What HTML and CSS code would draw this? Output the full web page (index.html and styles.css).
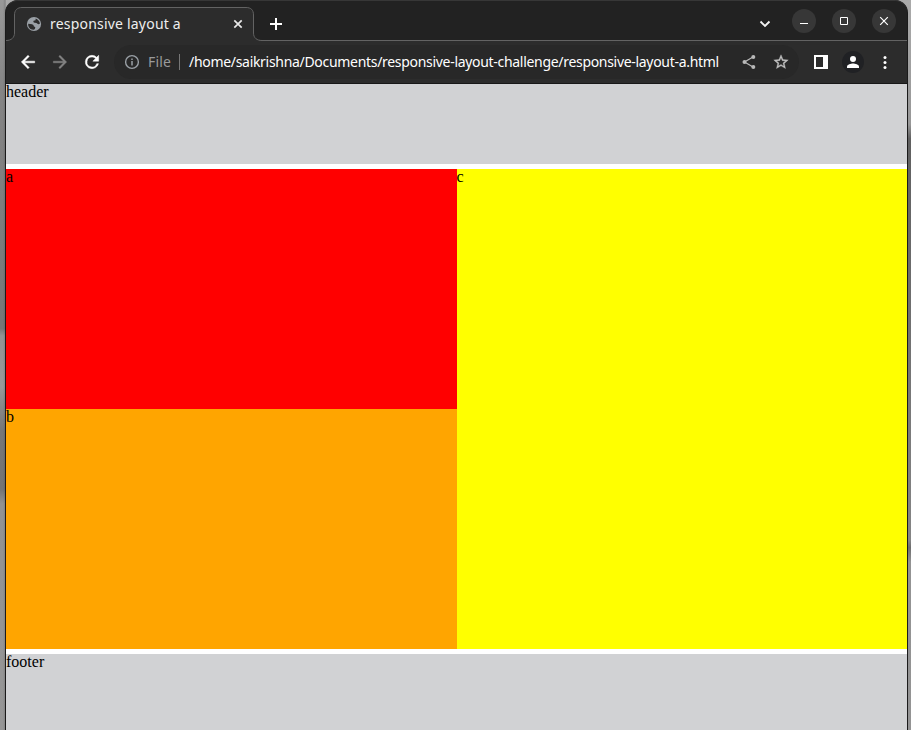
FILE: index.html
```
<!DOCTYPE html>
<html lang="en">
<head>
<meta charset="utf-8">
<title>responsive layout a</title>
<link rel="stylesheet" href="styles.css">
</head>
<body>
<div class="window">
  <div class="titlebar">
    <div class="tab">
      <svg class="tab-shape" width="257" height="35" viewBox="0 0 257 35"><path d="M0 35V33.5C5.500 33.500 8.500 30.500 8.500 26V8C8.500 3 11.500.5 16 .5H240C245 .5 247.500 3 247.500 8V26C247.500 31 251 33.500 256 33.500V35Z" fill="#2c2c2c"/><path d="M0 33.500C5.500 33.500 8.500 30.500 8.500 26V8C8.500 3 11.500.5 16 .5H240C245 .5 247.500 3 247.500 8V26C247.500 31 251 33.500 256 33.500" fill="none" stroke="#636363"/></svg>
      <svg class="globe" width="16" height="16" viewBox="0 0 16 16"><circle cx="8" cy="8" r="7.100" fill="#9aa0a6"/><path d="M2.200 7.700 6 8.300Q7.900 8.700 7.800 10.200L9.300 11.200Q9.300 12.700 8 13.800Q3.100 13.700 2.200 9.500ZM9.700 2.400Q13.700 4 13.900 7.700Q12 8.700 11.200 7.400Q10.600 6.700 8.400 6.800Q6.600 6.100 7.600 4.700L9.500 4.200Z" fill="#2c2c2c"/></svg>
      <span class="tab-title">responsive layout a</span>
      <svg class="tab-close" width="10" height="10" viewBox="0 0 10 10"><path d="m1.300 1.300 7.400 7.400m0-7.400L1.300 8.700" stroke="#e8e8e8" stroke-width="1.700"/></svg>
    </div>
    <svg class="new-tab" width="12" height="12" viewBox="0 0 12 12"><path d="M6 0v12M0 6h12" stroke="#fff" stroke-width="2"/></svg>
    <div class="controls">
      <svg class="chevron" width="12" height="8" viewBox="0 0 12 8"><path d="m1.500 1.500 4.500 4.500 4.500-4.500" fill="none" stroke="#f2f2f2" stroke-width="1.900"/></svg>
      <span class="control"><svg width="24" height="24" viewBox="0 0 24 24"><path d="M8 14.500h8" stroke="#fff"/></svg></span>
      <span class="control"><svg width="24" height="24" viewBox="0 0 24 24"><path d="M8.500 8.500h7v7h-7z" fill="none" stroke="#fff"/></svg></span>
      <span class="control"><svg width="24" height="24" viewBox="0 0 24 24"><path d="m8.200 8.200 7.600 7.600m0-7.600-7.600 7.600" stroke="#fff" stroke-width="1.200"/></svg></span>
    </div>
  </div>
  <div class="toolbar">
    <svg width="20" height="20" viewBox="0 0 24 24" fill="#fff"><path d="M20 11H7.830l5.590-5.590L12 4l-8 8 8 8 1.410-1.410L7.830 13H20z" stroke="#fff" stroke-width=".6"/></svg>
    <svg width="20" height="20" viewBox="0 0 24 24" fill="#838383"><path d="m12 4-1.410 1.410L16.170 11H4v2h12.170l-5.580 5.590L12 20l8-8z" stroke="#838383" stroke-width=".5"/></svg>
    <svg width="20" height="20" viewBox="0 0 24 24" fill="#fff"><path d="M17.650 6.350A7.960 7.960 0 0 0 12 4a8 8 0 1 0 7.730 10h-2.080A6 6 0 1 1 12 6c1.660 0 3.140.69 4.220 1.780L13 11h7V4z" stroke="#fff" stroke-width=".6"/></svg>
    <div class="address">
      <svg class="info" width="16" height="16" viewBox="0 0 16 16"><circle cx="8" cy="8" r="6.400" fill="none" stroke="#9aa0a6" stroke-width="1.400"/><path d="M8 7v4.500M8 4.400V6" stroke="#9aa0a6" stroke-width="1.500"/></svg>
      <span class="scheme">File</span>
      <span class="divider"></span>
      <span class="url">/home/saikrishna/Documents/responsive-layout-challenge/responsive-layout-a.html</span>
      <svg class="share" width="16" height="16" viewBox="0 0 16 16" fill="#b9b9b9"><path d="M12 3 3.500 8l8.500 5" fill="none" stroke="#b9b9b9" stroke-width="1.200"/><circle cx="12.300" cy="3" r="2"/><circle cx="3.500" cy="8" r="2"/><circle cx="12.300" cy="13" r="2"/></svg>
      <svg class="star" width="16" height="16" viewBox="1 1 22 22" fill="#c0c0c0"><path d="m22 9.240-7.190-.62L12 2 9.190 8.630 2 9.240l5.460 4.730L5.820 21 12 17.270 18.180 21l-1.630-7.030zM12 15.400l-3.760 2.270 1-4.280-3.320-2.880 4.380-.38L12 6.100l1.710 4.040 4.380.38-3.320 2.880 1 4.280z" stroke="#c0c0c0" stroke-width=".5"/></svg>
    </div>
    <svg class="panel" width="14" height="14" viewBox="0 0 14 14"><path d="M0 0h14v14H0zM2 2v10h7V2z" fill="#fff" fill-rule="evenodd"/></svg>
    <span class="profile"><svg width="12" height="12" viewBox="0 0 12 12" fill="#fff"><circle cx="6" cy="3" r="3"/><path d="M0 12v-1.500C0 8.500 4 7.500 6 7.500s6 1 6 3V12z"/></svg></span>
    <svg class="menu" width="4" height="14" viewBox="0 0 4 14" fill="#fff"><circle cx="2" cy="2.500" r="1.500"/><circle cx="2" cy="7.500" r="1.500"/><circle cx="2" cy="12.500" r="1.500"/></svg>
  </div>
  <div class="page">
    <header>header</header>
    <main>
      <section class="a">a</section>
      <section class="b">b</section>
      <section class="c">c</section>
    </main>
    <footer>footer</footer>
  </div>
</div>
</body>
</html>
```
FILE: styles.css
```
* { box-sizing: border-box; }
html, body { margin: 0; height: 730px; overflow: hidden; }
body {
  padding: 0 3px 0 5px;
  background:
    linear-gradient(90deg, transparent 3px, rgba(0,0,0,.12) 5px, transparent 6px),
    linear-gradient(#999 0, #858585 12%, #777 44%, #777 45%, #939393 46%, #999 53%, #929292 54%, #777 59%, #747474 67%, #929292 69%, #969696 100%) 0 0 / 6px 100% no-repeat,
    linear-gradient(#aaa 0, #989898 17%, #606060 19%, #707070 44%, #858585 74%, #6e6e6e 75%, #939393 77%, #949494 100%);
}
svg { display: block; flex: none; }
.window {
  height: 730px;
  border: 1px solid #1a1a1a;
  border-width: 0 1px;
  border-radius: 13px 13px 0 0;
  overflow: hidden;
  background: #222;
  font: 14px/20px "Noto Sans", sans-serif;
  color: #fff;
}
.titlebar {
  display: flex;
  height: 41px;
  border-top: 1px solid #373737;
  border-bottom: 1px solid #636363;
  border-radius: 12px 12px 0 0;
}
.tab {
  position: relative;
  display: flex;
  align-items: center;
  width: 256px;
  height: 34px;
  margin-top: 6px;
  padding: 0 15px 1px 20px;
}
.tab-shape { position: absolute; left: 0; top: 0; }
.globe, .tab-title, .tab-close { position: relative; }
.tab-title { margin-left: 8px; flex: 1; color: #eee; white-space: nowrap; letter-spacing: .2px; }
.tab-close { margin-right: 4px; }
.new-tab { margin: 17px 0 0 8px; }
.controls { display: flex; margin: 8px 11px 0 auto; gap: 16px; }
.chevron { margin: 11px 5px 0 0; }
.control { width: 24px; height: 24px; border-radius: 50%; background: #373737; }
.toolbar {
  display: flex;
  align-items: center;
  height: 43px;
  padding: 0 19px 0 12px;
  gap: 12px;
  background: #2c2c2c;
  border-bottom: 1px solid #181818;
}
.address {
  flex: none;
  display: flex;
  align-items: center;
  width: 685px;
  height: 34px;
  padding: 0 10px;
  border-radius: 17px;
  background: #282828;
}
.scheme { flex: none; width: 31px; margin-left: 8px; color: #9a9a9a; white-space: nowrap; letter-spacing: .2px; }
.divider { flex: none; width: 1px; height: 16px; background: #777; }
.url { flex: 1; min-width: 0; margin-left: 9px; white-space: nowrap; letter-spacing: -.305px; }
.star { margin-left: 16px; }
.panel { flex: none; margin-left: 3px; }
.profile { flex: none; display: grid; place-items: center; width: 22px; height: 22px; margin-left: 2px; border-radius: 50%; background: #202124; }
.menu { margin-left: 7px; }
.page {
  height: 646px;
  overflow: hidden;
  background: #fff;
  color: #000;
  font: 16px/16px "Liberation Serif", serif;
}
header, footer { height: 80px; background: #d1d2d4; }
main {
  display: grid;
  grid-template-columns: 1fr 1fr;
  grid-template-rows: 240px 240px;
  margin: 5px 0;
}
.a { background: red; }
.b { background: orange; }
.c { grid-column: 2; grid-row: 1 / 3; background: yellow; }
```
